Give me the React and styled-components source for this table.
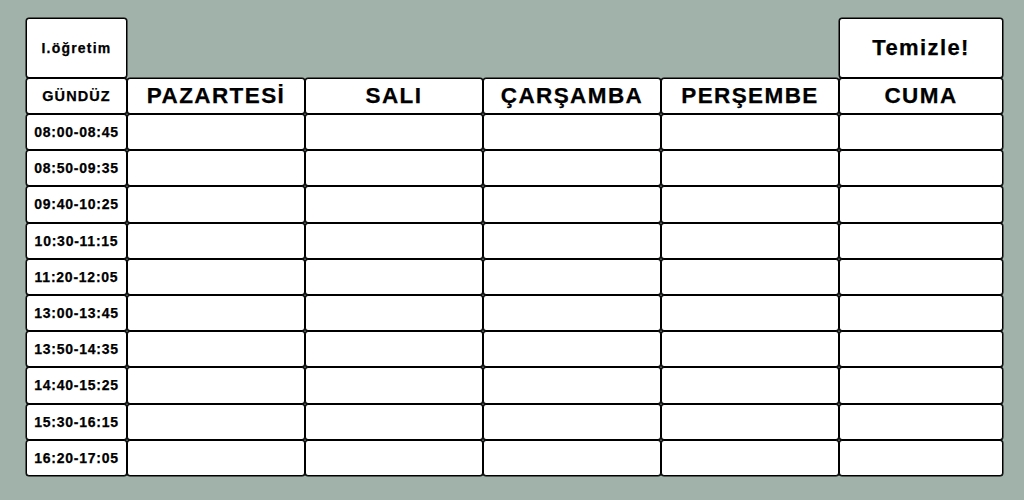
import styled, { createGlobalStyle } from 'styled-components';

const GlobalStyle = createGlobalStyle`
	html, body {
		margin: 0;
		padding: 0;
		background-color: #a0b2a9;
	}
`;

const Page = styled.div`
	width: 1024px;
	height: 500px;
	box-sizing: border-box;
	padding: 18px 0 0 26px;
	font-family: 'Liberation Sans', Arial, sans-serif;
	font-weight: 700;
	color: #000;
`;

const Table = styled.div`
	display: grid;
	grid-template-columns: 101px repeat(4, 178px) 164px;
	grid-template-rows: 60px 36px repeat(10, 1fr);
	width: 977px;
	height: 458px;
`;

const Cell = styled.div`
	box-sizing: border-box;
	display: flex;
	align-items: center;
	justify-content: center;
	background: #fff;
	border: 1px solid #000;
	border-radius: 3px;
	box-shadow: 0 0 0 0.5px #000;
	font-size: ${p => p.$size || 14}px;
	letter-spacing: ${p => p.$spacing || 0}px;
	-webkit-text-stroke: 0.25px #000;
	white-space: nowrap;
`;

const Blank = styled.div`
	grid-column: 2 / 6;
`;

const days = ['PAZARTESİ', 'SALI', 'ÇARŞAMBA', 'PERŞEMBE', 'CUMA'];

const times = [
	'08:00-08:45',
	'08:50-09:35',
	'09:40-10:25',
	'10:30-11:15',
	'11:20-12:05',
	'13:00-13:45',
	'13:50-14:35',
	'14:40-15:25',
	'15:30-16:15',
	'16:20-17:05',
];

export default function App() {
	return (
		<>
			<GlobalStyle />
			<Page>
				<Table>
					<Cell $size={14} $spacing={1.2}>I.öğretim</Cell>
					<Blank />
					<Cell $size={22} $spacing={1.4}>Temizle!</Cell>

					<Cell $size={14.5} $spacing={1.1}>GÜNDÜZ</Cell>
					{days.map(day => (
						<Cell key={day} $size={22.5} $spacing={1.4}>
							{day}
						</Cell>
					))}

					{times.map(time => (
						<>
							<Cell key={time} $size={14} $spacing={0.75}>
								{time}
							</Cell>
							{days.map(day => (
								<Cell key={time + day} />
							))}
						</>
					))}
				</Table>
			</Page>
		</>
	);
}
